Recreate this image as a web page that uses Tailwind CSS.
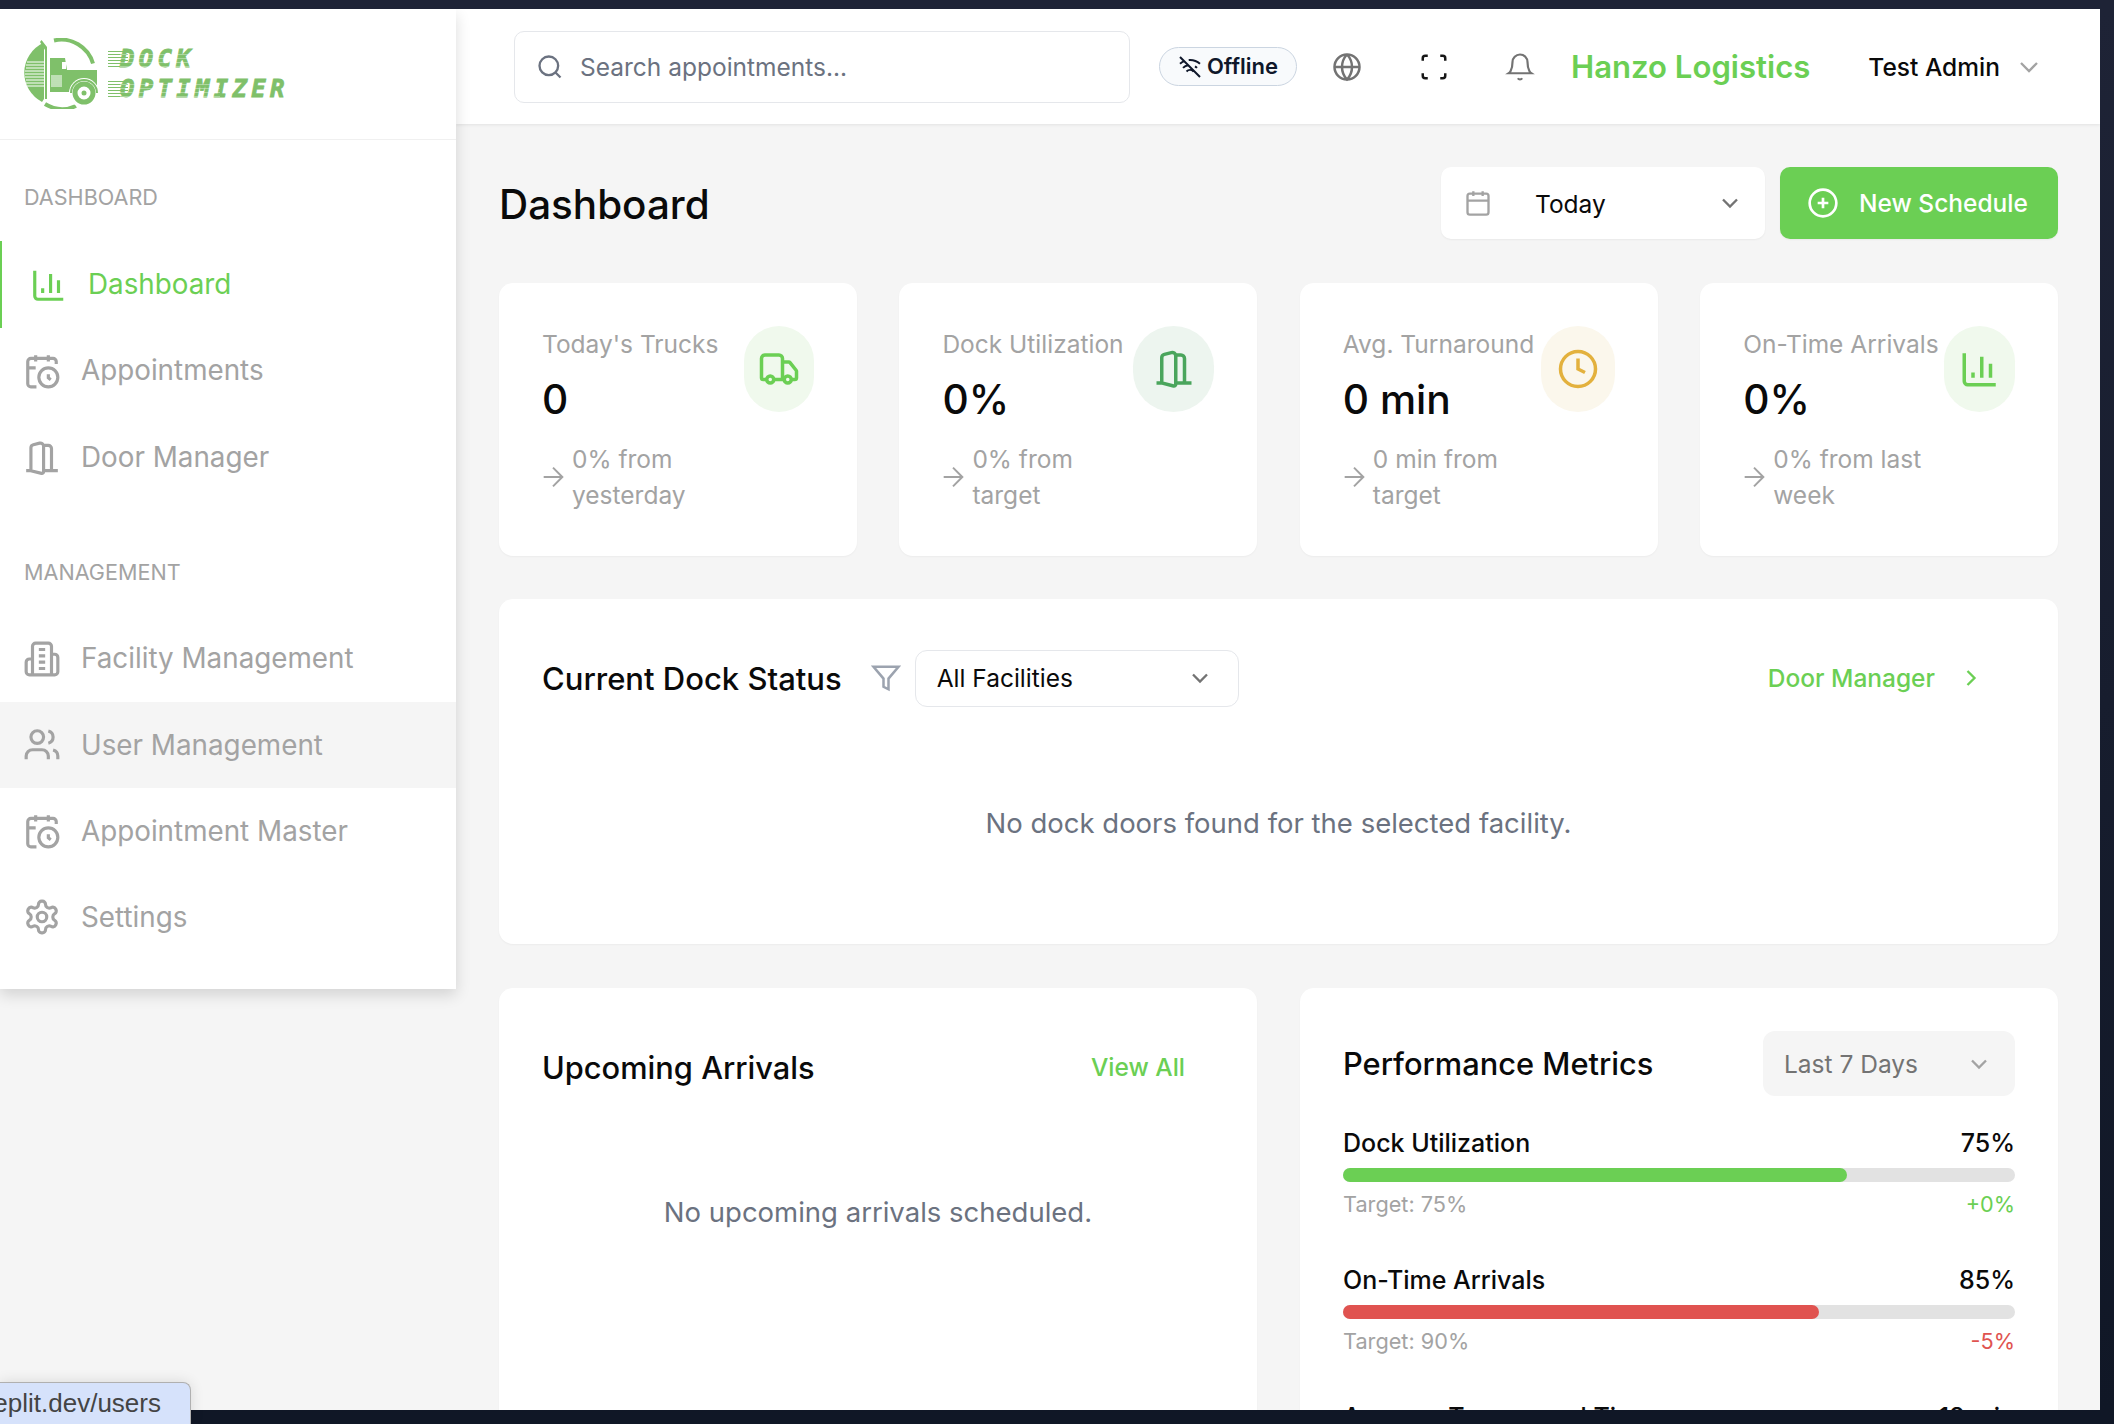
<!DOCTYPE html>
<html lang="en">
<head>
    <meta charset="UTF-8">
    <meta name="viewport" content="width=device-width, initial-scale=1.0">
    <title>Dashboard - Dock Optimizer</title>
    <script src="https://cdn.jsdelivr.net/npm/@tailwindcss/browser@4"></script>
</head>
<body class="relative flex h-[1424px] w-[2114px] flex-col overflow-hidden bg-[#101726] font-[Inter,sans-serif] text-[24.5px] text-[#0a0a0a]">
    <!-- shared icons -->
    <svg class="hidden">
        <symbol id="i-chart" viewBox="0 0 24 24"><path d="M3 3v16a2 2 0 0 0 2 2h16M8 17v-3M13 17V5M18 17V9"/></symbol>
        <symbol id="i-calclock" viewBox="0 0 24 24"><path d="M21 7.5V6a2 2 0 0 0-2-2H5a2 2 0 0 0-2 2v14a2 2 0 0 0 2 2h3.5M16 2v4M8 2v4M3 10h5M17.5 17.5 16 16.3V14"/><circle cx="16" cy="16" r="6"/></symbol>
        <symbol id="i-door" viewBox="0 0 24 24"><path d="M13 4h3a2 2 0 0 1 2 2v14M2 20h3M13 20h9M10 12v.01M13 4.562v16.157a1 1 0 0 1-1.242.97L5 20V5.562a2 2 0 0 1 1.515-1.94l4-1A2 2 0 0 1 13 4.561Z"/></symbol>
        <symbol id="i-building" viewBox="0 0 24 24"><path d="M6 22V4a2 2 0 0 1 2-2h8a2 2 0 0 1 2 2v18ZM6 12H4a2 2 0 0 0-2 2v6a2 2 0 0 0 2 2h2M18 9h2a2 2 0 0 1 2 2v9a2 2 0 0 1-2 2h-2M10 6h4M10 10h4M10 14h4M10 18h4"/></symbol>
        <symbol id="i-users" viewBox="0 0 24 24"><path d="M16 21v-2a4 4 0 0 0-4-4H6a4 4 0 0 0-4 4v2M22 21v-2a4 4 0 0 0-3-3.87M16 3.13a4 4 0 0 1 0 7.75"/><circle cx="9" cy="7" r="4"/></symbol>
        <symbol id="i-gear" viewBox="0 0 24 24"><path d="M12.22 2h-.44a2 2 0 0 0-2 2v.18a2 2 0 0 1-1 1.73l-.43.25a2 2 0 0 1-2 0l-.15-.08a2 2 0 0 0-2.73.73l-.22.38a2 2 0 0 0 .73 2.73l.15.1a2 2 0 0 1 1 1.72v.51a2 2 0 0 1-1 1.74l-.15.09a2 2 0 0 0-.73 2.73l.22.38a2 2 0 0 0 2.73.73l.15-.08a2 2 0 0 1 2 0l.43.25a2 2 0 0 1 1 1.73V20a2 2 0 0 0 2 2h.44a2 2 0 0 0 2-2v-.18a2 2 0 0 1 1-1.73l.43-.25a2 2 0 0 1 2 0l.15.08a2 2 0 0 0 2.73-.73l.22-.39a2 2 0 0 0-.73-2.73l-.15-.08a2 2 0 0 1-1-1.74v-.5a2 2 0 0 1 1-1.74l.15-.09a2 2 0 0 0 .73-2.73l-.22-.38a2 2 0 0 0-2.73-.73l-.15.08a2 2 0 0 1-2 0l-.43-.25a2 2 0 0 1-1-1.73V4a2 2 0 0 0-2-2z"/><circle cx="12" cy="12" r="3"/></symbol>
        <symbol id="i-chevron" viewBox="0 0 24 24"><path d="m6 9 6 6 6-6"/></symbol>
        <symbol id="i-arrow" viewBox="0 0 24 24"><path d="M5 12h14M12 5l7 7-7 7"/></symbol>
    </svg>

    <div class="h-[9px] shrink-0 bg-[#1e2336]"></div>

    <div class="flex h-[1401px] shrink-0">
        <div class="flex w-[2100px] shrink-0 overflow-hidden bg-[#f5f5f5]">
            <!-- sidebar -->
            <aside class="z-10 h-[980px] w-[456px] shrink-0 self-start bg-white shadow-[0_6px_14px_rgba(0,0,0,0.14)]">
                <div class="flex h-[131px] items-center border-b border-[#f0f0f0] pb-[2px] pl-[24px]">
                    <svg class="h-[71px] w-[74px] shrink-0" viewBox="24 38 74 71">
                        <path d="M54 40.5a33 33 0 0 1 39 23" fill="none" stroke="#7fc06a" stroke-width="4"/>
                        <path d="M45 104a33 33 0 0 0 31 2" fill="none" stroke="#7fc06a" stroke-width="4"/>
                        <path d="M43 43a33 33 0 0 0-1 59l2-3V48z" fill="#7fc06a"/>
                        <path d="M27 62h17M26 65h18M26 68h18M25 71h19M25 74h19M25 77h19M26 80h18M26 83h18M27 86h17" stroke="#fff" stroke-width="1"/>
                        <path d="M45 99V50l-5-8 1.500-2 5.500 7v52z" fill="#7fc06a"/>
                        <path d="M50 78V58h15l2 12h30v18H71l-2 4H50z" fill="#7fc06a"/>
                        <path d="M51 76h11M51 78h11M51 80h11M51 82h11M51 84h11M51 86h11" stroke="#fff" stroke-width="1"/>
                        <path d="M62 62h4v7h-4z" fill="#fff"/>
                        <circle cx="84" cy="93" r="15" fill="#fff"/>
                        <path d="M71 93a13 13 0 0 1 26 0" fill="none" stroke="#7fc06a" stroke-width="2"/>
                        <circle cx="84" cy="93" r="9" fill="none" stroke="#7fc06a" stroke-width="5"/>
                        <circle cx="84" cy="93" r="2.500" fill="#7fc06a"/>
                    </svg>
                    <div class="ml-[10px] flex flex-col gap-[12px] pt-[2px] font-['DejaVu_Sans_Mono',monospace] text-[24px] leading-[18px] font-bold text-[#7fc06a] italic [-webkit-text-stroke:0.8px_#7fc06a]">
                        <div class="relative pl-[12px] tracking-[4.3px]">
                            <span class="absolute top-[1px] left-0 h-[16px] w-[20px] bg-[repeating-linear-gradient(180deg,#7fc06a_0_1px,transparent_1px_3px)]"></span>DOCK
                            <span class="absolute top-[1px] left-[12px] h-[16px] w-[76px] bg-[repeating-linear-gradient(180deg,transparent_0_3px,rgba(255,255,255,0.35)_3px_4px)]"></span>
                        </div>
                        <div class="relative pl-[12px] tracking-[4.3px]">
                            <span class="absolute top-[1px] left-0 h-[16px] w-[20px] bg-[repeating-linear-gradient(180deg,#7fc06a_0_1px,transparent_1px_3px)]"></span>OPTIMIZER
                            <span class="absolute top-[1px] left-[12px] h-[16px] w-[100px] bg-[repeating-linear-gradient(180deg,transparent_0_3px,rgba(255,255,255,0.35)_3px_4px)]"></span>
                        </div>
                    </div>
                </div>

                <div class="flex h-[71px] items-end pl-[24px] text-[21.6px] leading-[28px] text-[#a3a3a3]">DASHBOARD</div>
                <nav class="mt-[30px] text-[27.8px] text-[#a3a3a3]">
                    <a class="flex h-[87px] items-center gap-[20px] border-l-2 border-[#6bcf54] pl-[28px] text-[#6bcf54]"><svg class="h-[38px] w-[38px] fill-none stroke-current stroke-2"><use href="#i-chart"/></svg>Dashboard</a>
                    <a class="flex h-[86px] items-center gap-[20px] pl-[23px]"><svg class="h-[38px] w-[38px] fill-none stroke-current stroke-2"><use href="#i-calclock"/></svg>Appointments</a>
                    <a class="flex h-[87px] items-center gap-[20px] pl-[23px]"><svg class="h-[38px] w-[38px] fill-none stroke-current stroke-2"><use href="#i-door"/></svg>Door Manager</a>
                </nav>
                <div class="mt-[57px] pl-[24px] text-[21.6px] leading-[28px] text-[#a3a3a3]">MANAGEMENT</div>
                <nav class="mt-[29px] text-[27.8px] text-[#a3a3a3]">
                    <a class="flex h-[87px] items-center gap-[20px] pl-[23px]"><svg class="h-[38px] w-[38px] fill-none stroke-current stroke-2"><use href="#i-building"/></svg>Facility Management</a>
                    <a class="flex h-[86px] items-center gap-[20px] bg-[#f5f5f5] pl-[23px]"><svg class="h-[38px] w-[38px] fill-none stroke-current stroke-2"><use href="#i-users"/></svg><span class="pt-[1px]">User Management</span></a>
                    <a class="flex h-[86px] items-center gap-[20px] pl-[23px]"><svg class="h-[38px] w-[38px] fill-none stroke-current stroke-2"><use href="#i-calclock"/></svg><span class="pt-[1px]">Appointment Master</span></a>
                    <a class="flex h-[86px] items-center gap-[20px] pl-[23px]"><svg class="h-[38px] w-[38px] fill-none stroke-current stroke-2"><use href="#i-gear"/></svg><span class="pt-[1px]">Settings</span></a>
                </nav>
            </aside>

            <div class="flex min-w-0 flex-1 flex-col">
                <!-- header -->
                <header class="flex h-[115px] shrink-0 items-center bg-white pl-[58px] shadow-[0_1px_3px_rgba(0,0,0,0.08)]">
                    <div class="flex h-[72px] w-[616px] items-center gap-[16px] rounded-[10px] border border-[#e5e7eb] pl-[21px] text-[#6b7280]">
                        <svg class="h-[28px] w-[28px] fill-none stroke-current stroke-2" viewBox="0 0 24 24"><circle cx="11" cy="11" r="8"/><path d="m21 21-4.3-4.3"/></svg>
                        <span class="pt-[2px]">Search appointments...</span>
                    </div>
                    <div class="ml-[29px] flex h-[39px] w-[138px] items-center justify-center gap-[5px] rounded-full border border-[#cbd5e1] bg-[#f8fafc] text-[22px] font-semibold text-[#0f172a]">
                        <svg class="h-[24px] w-[24px] fill-none stroke-current stroke-2" viewBox="0 0 24 24"><path d="M12 20h.01M8.5 16.429a5 5 0 0 1 7 0M5 12.859a10 10 0 0 1 5.17-2.69M19 12.859a10 10 0 0 0-2.007-1.523M2 8.82a15 15 0 0 1 4.177-2.643M22 8.82a15 15 0 0 0-11.288-3.764M2 2l20 20"/></svg>
                        Offline
                    </div>
                    <svg class="ml-[35px] h-[30px] w-[30px] fill-none stroke-[#737373] stroke-2" viewBox="0 0 24 24"><circle cx="12" cy="12" r="10"/><path d="M12 2a14.5 14.5 0 0 0 0 20 14.5 14.5 0 0 0 0-20M2 12h20"/></svg>
                    <svg class="ml-[57px] h-[30px] w-[30px] fill-none stroke-[#171717] stroke-2" viewBox="0 0 24 24"><path d="M3 7V5a2 2 0 0 1 2-2h2M17 3h2a2 2 0 0 1 2 2v2M21 17v2a2 2 0 0 1-2 2h-2M7 21H5a2 2 0 0 1-2-2v-2"/></svg>
                    <svg class="ml-[56px] h-[30px] w-[30px] fill-none stroke-[#737373] stroke-[1.75]" viewBox="0 0 24 24"><path d="M6 8a6 6 0 0 1 12 0c0 7 3 9 3 9H3s3-2 3-9M10.3 21a1.94 1.94 0 0 0 3.4 0"/></svg>
                    <span class="ml-[36px] pt-[2px] text-[31.1px] font-semibold text-[#6bcf54]">Hanzo Logistics</span>
                    <span class="ml-[58px] pt-[2px] font-medium">Test Admin</span>
                    <svg class="ml-[13px] h-[32px] w-[32px] fill-none stroke-[#a3a3a3] stroke-[1.75]"><use href="#i-chevron"/></svg>
                </header>

                <main class="pt-[43px] pr-[42px] pl-[43px]">
                    <div class="flex h-[72px] items-center justify-between">
                        <h1 class="pt-[5px] text-[40.4px] font-medium">Dashboard</h1>
                        <div class="flex gap-[15px]">
                            <div class="flex h-[72px] w-[324px] items-center rounded-[10px] bg-white pl-[23px] shadow-[0_1px_2px_rgba(0,0,0,0.05)]">
                                <svg class="h-[28px] w-[28px] fill-none stroke-[#a3a3a3] stroke-2" viewBox="0 0 24 24"><rect x="3" y="4" width="18" height="18" rx="2"/><path d="M16 2v4M8 2v4M3 10h18"/></svg>
                                <span class="ml-[43px] flex-1 pt-[2px]">Today</span>
                                <svg class="mr-[21px] h-[28px] w-[28px] fill-none stroke-[#737373] stroke-2"><use href="#i-chevron"/></svg>
                            </div>
                            <div class="flex h-[72px] w-[278px] items-center gap-[20px] rounded-[10px] bg-[#6bcf54] pl-[27px] font-medium text-white shadow-[0_1px_2px_rgba(0,0,0,0.05)]">
                                <svg class="h-[32px] w-[32px] fill-none stroke-current stroke-2" viewBox="0 0 24 24"><circle cx="12" cy="12" r="10"/><path d="M8 12h8M12 8v8"/></svg>
                                New Schedule
                            </div>
                        </div>
                    </div>

                    <!-- stat cards -->
                    <div class="mt-[44px] grid grid-cols-4 gap-[42.67px]">
                        <div class="h-[273px] rounded-[14px] bg-white p-[43px] shadow-[0_1px_2px_rgba(0,0,0,0.04)]">
                            <div class="flex justify-between">
                                <div>
                                    <p class="leading-[36px] text-[#a3a3a3]">Today's Trucks</p>
                                    <p class="mt-[9px] text-[40.7px] leading-[57px] font-medium">0</p>
                                </div>
                                <div class="flex h-[86px] w-[70px] items-center justify-center rounded-full bg-[#f0f9ed]">
                                    <svg class="h-[42px] w-[42px] fill-none stroke-[#6bcf54] stroke-2" viewBox="0 0 24 24"><path d="M14 18V6a2 2 0 0 0-2-2H4a2 2 0 0 0-2 2v11a1 1 0 0 0 1 1h2M15 18H9M19 18h2a1 1 0 0 0 1-1v-3.65a1 1 0 0 0-.22-.624l-3.48-4.35A1 1 0 0 0 17.52 8H14"/><circle cx="17" cy="18" r="2"/><circle cx="7" cy="18" r="2"/></svg>
                                </div>
                            </div>
                            <div class="mt-[13px] flex items-center gap-[3px] leading-[36px] text-[#a3a3a3]">
                                <svg class="-ml-[5px] h-[32px] w-[32px] shrink-0 fill-none stroke-current stroke-[1.5]"><use href="#i-arrow"/></svg>
                                <span>0% from<br>yesterday</span>
                            </div>
                        </div>
                        <div class="h-[273px] rounded-[14px] bg-white p-[43px] shadow-[0_1px_2px_rgba(0,0,0,0.04)]">
                            <div class="flex justify-between">
                                <div>
                                    <p class="leading-[36px] text-[#a3a3a3]">Dock Utilization</p>
                                    <p class="mt-[9px] text-[40.7px] leading-[57px] font-medium">0%</p>
                                </div>
                                <div class="flex h-[86px] w-[81px] items-center justify-center rounded-full bg-[#edf5ef]">
                                    <svg class="h-[42px] w-[42px] fill-none stroke-[#4aa55c] stroke-2"><use href="#i-door"/></svg>
                                </div>
                            </div>
                            <div class="mt-[13px] flex items-center gap-[3px] leading-[36px] text-[#a3a3a3]">
                                <svg class="-ml-[5px] h-[32px] w-[32px] shrink-0 fill-none stroke-current stroke-[1.5]"><use href="#i-arrow"/></svg>
                                <span>0% from<br>target</span>
                            </div>
                        </div>
                        <div class="h-[273px] rounded-[14px] bg-white p-[43px] shadow-[0_1px_2px_rgba(0,0,0,0.04)]">
                            <div class="flex justify-between">
                                <div>
                                    <p class="leading-[36px] text-[#a3a3a3]">Avg. Turnaround</p>
                                    <p class="mt-[9px] text-[40.7px] leading-[57px] font-medium">0 min</p>
                                </div>
                                <div class="flex h-[86px] w-[74px] items-center justify-center rounded-full bg-[#fbf7ec]">
                                    <svg class="h-[42px] w-[42px] fill-none stroke-[#e3b13d] stroke-2" viewBox="0 0 24 24"><circle cx="12" cy="12" r="10"/><path d="M12 6v6l4 2"/></svg>
                                </div>
                            </div>
                            <div class="mt-[13px] flex items-center gap-[3px] leading-[36px] text-[#a3a3a3]">
                                <svg class="-ml-[5px] h-[32px] w-[32px] shrink-0 fill-none stroke-current stroke-[1.5]"><use href="#i-arrow"/></svg>
                                <span>0 min from<br>target</span>
                            </div>
                        </div>
                        <div class="h-[273px] rounded-[14px] bg-white p-[43px] shadow-[0_1px_2px_rgba(0,0,0,0.04)]">
                            <div class="flex justify-between">
                                <div>
                                    <p class="leading-[36px] text-[#a3a3a3]">On-Time Arrivals</p>
                                    <p class="mt-[9px] text-[40.7px] leading-[57px] font-medium">0%</p>
                                </div>
                                <div class="flex h-[86px] w-[71px] items-center justify-center rounded-full bg-[#f0f9ed]">
                                    <svg class="h-[42px] w-[42px] fill-none stroke-[#6bcf54] stroke-2"><use href="#i-chart"/></svg>
                                </div>
                            </div>
                            <div class="mt-[13px] flex items-center gap-[3px] leading-[36px] text-[#a3a3a3]">
                                <svg class="-ml-[5px] h-[32px] w-[32px] shrink-0 fill-none stroke-current stroke-[1.5]"><use href="#i-arrow"/></svg>
                                <span>0% from last<br>week</span>
                            </div>
                        </div>
                    </div>

                    <!-- dock status -->
                    <section class="mt-[43px] h-[345px] rounded-[14px] bg-white p-[43px] shadow-[0_1px_2px_rgba(0,0,0,0.04)]">
                        <div class="flex h-[72px] items-center">
                            <h2 class="pt-[2px] text-[31px] font-medium">Current Dock Status</h2>
                            <svg class="ml-[29px] h-[30px] w-[30px] fill-none stroke-[#9ca3af] stroke-2" viewBox="0 0 24 24"><path d="M22 3H2l8 9.46V19l4 2v-8.54L22 3z"/></svg>
                            <div class="ml-[14px] flex h-[57px] w-[324px] items-center justify-between rounded-[12px] border border-[#e5e7eb] pr-[24px] pl-[21px]">
                                <span class="pt-[1px]">All Facilities</span>
                                <svg class="h-[28px] w-[28px] fill-none stroke-[#737373] stroke-2"><use href="#i-chevron"/></svg>
                            </div>
                            <div class="ml-auto flex items-center gap-[22px] pr-[30px] font-medium text-[#6bcf54]">
                                <span class="pt-[1px]">Door Manager</span>
                                <svg class="h-[28px] w-[28px] fill-none stroke-current stroke-2" viewBox="0 0 24 24"><path d="m9 18 6-6-6-6"/></svg>
                            </div>
                        </div>
                        <p class="mt-[88px] text-center text-[27.5px] leading-[43px] text-[#6b7280]">No dock doors found for the selected facility.</p>
                    </section>

                    <div class="mt-[44px] grid grid-cols-2 gap-[43px]">
                        <section class="h-[500px] rounded-[14px] bg-white p-[43px] shadow-[0_1px_2px_rgba(0,0,0,0.04)]">
                            <div class="flex h-[72px] items-center justify-between pr-[29px]">
                                <h2 class="pt-[2px] text-[30.8px] font-medium">Upcoming Arrivals</h2>
                                <span class="pt-[1px] font-medium text-[#6bcf54]">View All</span>
                            </div>
                            <p class="mt-[88px] text-center text-[27.5px] leading-[43px] text-[#6b7280]">No upcoming arrivals scheduled.</p>
                        </section>

                        <section class="h-[500px] rounded-[14px] bg-white p-[43px] shadow-[0_1px_2px_rgba(0,0,0,0.04)]">
                            <div class="flex h-[65px] items-center justify-between">
                                <h2 class="pt-[2px] text-[30.8px] font-medium">Performance Metrics</h2>
                                <div class="flex h-[65px] w-[252px] items-center justify-between rounded-[12px] bg-[#f5f5f5] pr-[22px] pl-[21px] text-[#737373]">
                                    <span class="pt-[1px]">Last 7 Days</span>
                                    <svg class="h-[28px] w-[28px] fill-none stroke-[#a3a3a3] stroke-2"><use href="#i-chevron"/></svg>
                                </div>
                            </div>

                            <div class="mt-[29px]">
                                <div class="flex justify-between text-[25px] leading-[36px] font-medium"><span>Dock Utilization</span><span>75%</span></div>
                                <div class="mt-[7px] h-[14px] rounded-full bg-[#e2e2e2]"><div class="h-full rounded-full bg-[#6bcf54]" style="width: 75%"></div></div>
                                <div class="mt-[6px] flex justify-between text-[21.7px] leading-[32px] text-[#a3a3a3]"><span>Target: 75%</span><span class="text-[#6bcf54]">+0%</span></div>
                            </div>
                            <div class="mt-[42px]">
                                <div class="flex justify-between text-[25px] leading-[36px] font-medium"><span>On-Time Arrivals</span><span>85%</span></div>
                                <div class="mt-[7px] h-[14px] rounded-full bg-[#e2e2e2]"><div class="h-full rounded-full bg-[#e05350]" style="width: 70.8%"></div></div>
                                <div class="mt-[6px] flex justify-between text-[21.7px] leading-[32px] text-[#a3a3a3]"><span>Target: 90%</span><span class="text-[#e05350]">-5%</span></div>
                            </div>
                            <div class="mt-[42px]">
                                <div class="flex justify-between text-[25px] leading-[36px] font-medium"><span>Average Turnaround Time</span><span>18 min</span></div>
                            </div>
                        </section>
                    </div>
                </main>
            </div>
        </div>
        <div class="w-[14px] shrink-0 bg-gradient-to-b from-[#1e2336] to-[#101726]"></div>
    </div>

    <!-- browser link preview -->
    <div class="absolute bottom-0 left-0 flex h-[42px] w-[191px] items-center justify-end rounded-tr-[8px] border-t border-r border-[#b0b0b0] bg-[#d6e2fb] pr-[29px] font-['Liberation_Sans',sans-serif] text-[26px] whitespace-nowrap text-[#444] shadow-[0_0_14px_rgba(0,0,0,0.12)]">eplit.dev/users</div>
</body>
</html>
